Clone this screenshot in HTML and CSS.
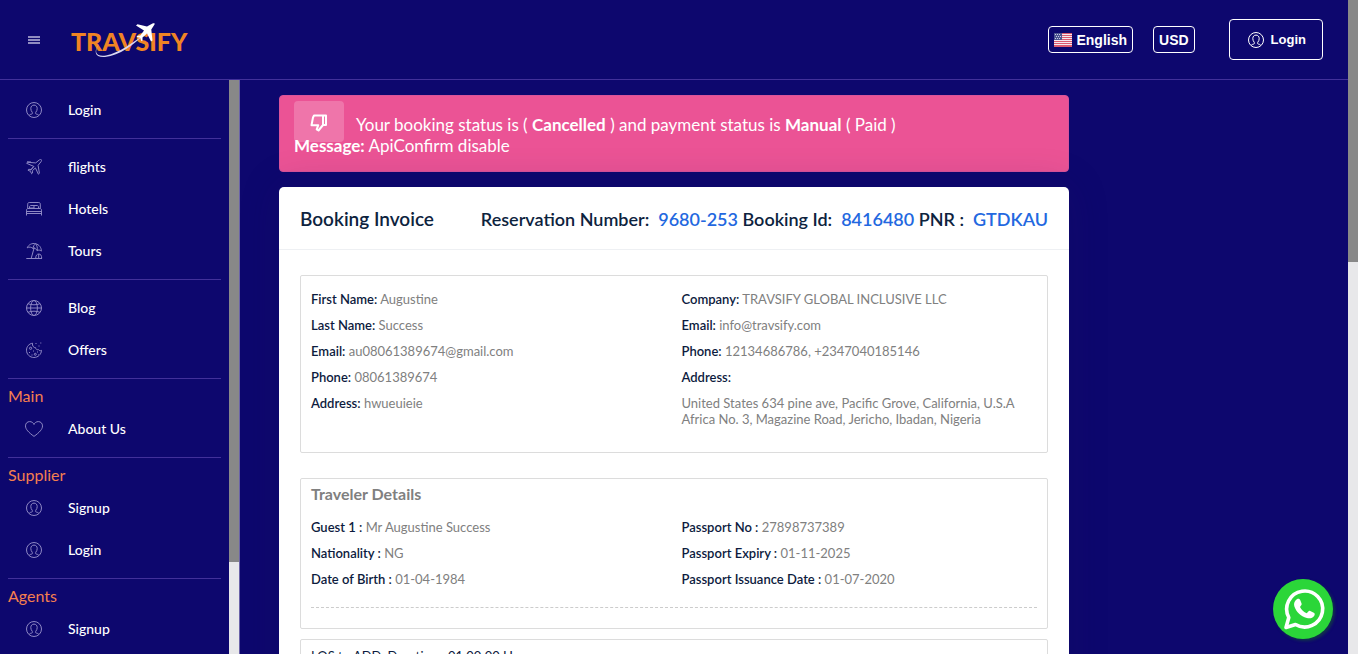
FILE: index.html
```html
<!DOCTYPE html>
<html lang="en">
<head>
<meta charset="utf-8">
<title>Booking Invoice</title>
<link rel="stylesheet" href="styles.css">
</head>
<body>
<svg class="sprite" aria-hidden="true">
  <symbol id="i-user" viewBox="0 0 16 16"><circle cx="8" cy="8" r="7.5"/><path d="M3.2 13.3c.6-.8 1.500-1 2.600-1.300.8-.2.9-1.100.3-1.900-.7-.9-1.300-2-1.300-3.500 0-2.100 1.200-3.500 3.200-3.500s3.200 1.400 3.200 3.500c0 1.500-.6 2.600-1.300 3.500-.6.8-.5 1.700.3 1.900 1.100.3 2 .5 2.600 1.300"/></symbol>
  <symbol id="i-plane" viewBox="0 0 16 16"><path d="M9.700 3.900 13 1.200c.8-.7 2-.9 2.300-.5.4.4.2 1.500-.5 2.300L12.100 6.300l1.300 8-1 .9-3-6.300-3.100 2.900.2 2.200-.8.8-1.300-2.400-2.500-1.300.8-.8 2.300.2 2.800-3.100L.6 4.300l.9-1z"/><path d="M7.800 7.400 4.400 11.500M1 2.800l4 .2"/></symbol>
  <symbol id="i-bed" viewBox="0 0 16 16"><path d="M.5 14.500V9.200c0-1 .6-1.700 1.500-1.700h12c.9 0 1.500.7 1.500 1.700v5.300M.5 10.500h15M.5 12.500h15M1.700 7.400V3.200c0-1 .5-1.700 1.500-1.700h9.600c1 0 1.500.7 1.500 1.700v4.200M3.500 7.400V6c0-.8.4-1.500 1.300-1.500H8V7H3.600M8 4.500h3.200c.9 0 1.300.7 1.300 1.500v1.400"/></symbol>
  <symbol id="i-beach" viewBox="0 0 16 16"><path d="M.3 15.500H16M5.200 15.300 8.300 4.300M1.200 4.800C2.600 1.600 6-.1 9.600.7c3.600.9 5.900 4 5.700 7.400-1.200-1.200-2.900-1.300-4.100-.4-.5-1.700-1.900-2.500-4-2.100C5.500 4 3.100 3.600 1.200 4.800zM7 5.500C7.200 3.400 8 1.800 9.600.7c1.500 1.800 2 4.200 1.600 7M9.700 15.300c0-2.700 1.200-4.300 3.100-4.300s2.900 1.600 2.900 4.300M12.700 11v4.300"/></symbol>
  <symbol id="i-globe" viewBox="0 0 16 16"><circle cx="8" cy="8" r="7.500"/><ellipse cx="8" cy="8" rx="3.400" ry="7.500"/><path d="M.5 8h15M2 3.700c3.600 1.500 8.400 1.500 12 0M2 12.300c3.600-1.500 8.400-1.500 12 0"/></symbol>
  <symbol id="i-cookie" viewBox="0 0 16 16"><path d="M6.500 1.200C3 1.700.5 4.700.5 8.200c0 4.100 3.300 7.300 7.400 7.300s7.400-3.100 7.600-7.100c-1.300.6-2.400.3-3-.8-1.600.4-2.800-.4-2.900-1.900-2 .1-3.600-1.900-3.100-4.500z"/><circle cx="4.600" cy="6.300" r="1.100"/><circle cx="9.300" cy="12.300" r="1"/><path d="M3 10.500h1M7 9h1M11 10h1M5.500 13h1M9.500 1.500h1M12.500 4h1M14.300 1h1M12.500 12.500h.5"/></symbol>
  <symbol id="i-heart" viewBox="0 0 18 16"><path d="M9 15.400C3.500 11.300.5 8.300.5 4.900.5 2.300 2.300.6 4.700.6 6.700.6 8.300 1.700 9 3.500 9.700 1.700 11.300.6 13.300.6c2.400 0 4.200 1.700 4.200 4.300 0 3.400-3 6.400-8.500 10.500z"/></symbol>
</svg>

<div class="page">
  <header class="topbar">
    <div class="brand">
      <button class="menu" aria-label="Toggle menu"><span></span><span></span><span></span></button>
      <a href="#" class="logo" aria-label="Travsify">
        <svg width="122" height="40" viewBox="0 0 122 40">
          <text class="logo-text" x="1" y="31">TRAVSIFY</text>
          <path class="swoosh" d="M29 24C23 33 27 37 36 35.500 49 33 62 23 75 14 63 25 50 35.500 35 37 24.500 37.800 23.500 31 29 24z"/>
          <path class="jet" d="M66 5.500 67.500 4.300 77 6.500 82.500 3.400C84 2.800 85.200 3.200 84.500 4.600L81.300 9.500 82.500 20.500 81 21.500 77 13.500 72.500 17.500 72.500 20.500 71.500 21.300 70 17.800 66.500 17 67.300 15.800 70.300 15.500 74 10.500z"/>
        </svg>
      </a>
    </div>
    <div class="actions">
      <button class="pill">
        <svg width="18" height="14" viewBox="0 0 18 14" aria-hidden="true"><path fill="#f6e9ef" d="M0 0h18v14H0z"/><path fill="#dc5a70" d="M0 0h18v1H0zM0 2h18v1H0zM0 4h18v1H0zM0 6h18v1H0zM0 8h18v1H0zM0 10h18v1H0zM0 12h18v2H0z"/><path fill="#4d5590" d="M0 0h8v7H0z"/><path stroke="#c8cbe6" stroke-dasharray="1 1" d="M1 1.500h6M2 3.500h5M1 5.500h6"/></svg>
        English
      </button>
      <button class="pill">USD</button>
      <a class="login" href="#"><svg class="icon" width="16" height="16"><use href="#i-user"/></svg>Login</a>
    </div>
  </header>

  <div class="body">
    <nav class="sidebar">
      <div class="links">
        <a href="#"><svg class="icon"><use href="#i-user"/></svg>Login</a>
        <hr>
        <a href="#"><svg class="icon"><use href="#i-plane"/></svg>flights</a>
        <a href="#"><svg class="icon"><use href="#i-bed"/></svg>Hotels</a>
        <a href="#"><svg class="icon"><use href="#i-beach"/></svg>Tours</a>
        <hr>
        <a href="#"><svg class="icon"><use href="#i-globe"/></svg>Blog</a>
        <a href="#"><svg class="icon"><use href="#i-cookie"/></svg>Offers</a>
        <hr>
        <h2>Main</h2>
        <a href="#"><svg class="icon"><use href="#i-heart"/></svg>About Us</a>
        <hr>
        <h2>Supplier</h2>
        <a href="#"><svg class="icon"><use href="#i-user"/></svg>Signup</a>
        <a href="#"><svg class="icon"><use href="#i-user"/></svg>Login</a>
        <hr>
        <h2>Agents</h2>
        <a href="#"><svg class="icon"><use href="#i-user"/></svg>Signup</a>
      </div>
      <div class="track"><div class="thumb side-thumb"></div></div>
    </nav>

    <main class="content">
      <div class="column">
        <div class="alert" role="status">
          <div class="alert-row">
            <span class="alert-icon"><svg width="18" height="18" viewBox="0 0 18 18" aria-hidden="true"><path d="M4 1.500h9v9.500l-4.500 5.500-1.800-1.200 1.500-4H1.500L3 3.500zM13 1.500h3V11h-3z"/></svg></span>
            <p>Your booking status is ( <b>Cancelled</b> ) and payment status is <b>Manual</b> ( Paid )</p>
          </div>
          <p><b>Message:</b> ApiConfirm disable</p>
        </div>

        <section class="card">
          <header class="card-head">
            <h1>Booking Invoice</h1>
            <p>Reservation Number: <span>&nbsp;9680-253</span> Booking Id: <span>&nbsp;8416480</span> PNR : <span>&nbsp;GTDKAU</span></p>
          </header>
          <div class="card-body">
            <div class="box parties">
              <div class="cols">
                <div>
                  <p><b>First Name:</b> Augustine</p>
                  <p><b>Last Name:</b> Success</p>
                  <p><b>Email:</b> au08061389674@gmail.com</p>
                  <p><b>Phone:</b> 08061389674</p>
                  <p><b>Address:</b> hwueuieie</p>
                </div>
                <div>
                  <p><b>Company:</b> TRAVSIFY GLOBAL INCLUSIVE LLC</p>
                  <p><b>Email:</b> info@travsify.com</p>
                  <p><b>Phone:</b> 12134686786, +2347040185146</p>
                  <p><b>Address:</b></p>
                  <p>United States 634 pine ave, Pacific Grove, California, U.S.A<br>Africa No. 3, Magazine Road, Jericho, Ibadan, Nigeria</p>
                </div>
              </div>
            </div>
            <div class="box travelers">
              <h2>Traveler Details</h2>
              <div class="cols guest">
                <div>
                  <p><b>Guest 1 :</b> Mr Augustine Success</p>
                  <p><b>Nationality :</b> NG</p>
                  <p><b>Date of Birth :</b> 01-04-1984</p>
                </div>
                <div>
                  <p><b>Passport No :</b> 27898737389</p>
                  <p><b>Passport Expiry :</b> 01-11-2025</p>
                  <p><b>Passport Issuance Date :</b> 01-07-2020</p>
                </div>
              </div>
            </div>
            <div class="box route"><p>LOS to ADD, Duration : 01:00:00 H</p></div>
          </div>
        </section>
      </div>
    </main>
  </div>
  <a class="whatsapp" href="#" aria-label="WhatsApp">
    <svg viewBox="0 0 60 60"><path class="bubble" d="M13 48.500 15.800 38.500A18 18 0 1 1 22.500 45.500z"/><path class="phone" d="M22.500 21.500c1.800-2.400 4-2.200 4.800-.3l1.200 3.100c.5 1.300-.2 2-1.500 3.600 1.400 2.900 3.800 5.200 6.800 6.300 1.500-1.700 2.200-2.700 3.400-2.200l3.600 1.700c1.200.6 1.200 2 .3 3.300-1.500 2.100-4.100 2.900-7.300 2-6.100-1.800-10.800-6.600-12.400-11.600-.8-2.400-.1-4.400 1.100-5.900z"/></svg>
  </a>
</div>
<div class="track window-track"><div class="thumb window-thumb"></div></div>
</body>
</html>
```
FILE: styles.css
```css
* { box-sizing: border-box; margin: 0; }
body {
  display: flex;
  height: 100vh;
  overflow: hidden;
  background: #0d076e;
  color: #808080;
  font: 400 13px/16px Lato, "Liberation Sans", sans-serif;
}
a { color: inherit; text-decoration: none; }
button { font: inherit; color: inherit; background: none; cursor: pointer; }
.sprite { position: absolute; width: 0; height: 0; }
.icon, .sprite symbol { fill: none; stroke: currentColor; stroke-width: 1; }

.page { flex: 1; min-width: 0; display: flex; flex-direction: column; position: relative; }
.topbar {
  flex: none;
  display: flex;
  align-items: center;
  justify-content: space-between;
  height: 80px;
  padding: 0 25px 0 28px;
  border-bottom: 1px solid #41309a;
}
.brand { display: flex; align-items: center; gap: 30px; }
.menu { display: grid; gap: 1px; width: 12px; padding: 0; border: 0; }
.menu span { height: 2px; background: #908cc0; }
.logo svg { display: block; }
.logo-text { font: 900 25px Lato, sans-serif; fill: #f08424; }
.swoosh { fill: #d8d6f2; }
.jet { fill: #fff; }
.actions { display: flex; align-items: center; color: #fff; font: bold 14px/16px "Liberation Sans", Arial, sans-serif; }
.pill {
  display: flex;
  align-items: center;
  gap: 4px;
  height: 27px;
  margin-right: 20px;
  padding: 0 5px;
  border: 1px solid #fff;
  border-radius: 4px;
}
.login {
  display: flex;
  align-items: center;
  gap: 7px;
  height: 41px;
  margin-left: 14px;
  padding: 0 16px 0 18px;
  border: 1px solid #fff;
  border-radius: 4px;
  font-size: 13px;
}

.body { flex: 1; min-height: 0; display: flex; }
.sidebar { flex: none; display: flex; width: 240px; overflow: hidden; border-right: 1px solid #6a62a8; }
.links { flex: 1; padding: 9px 8px 0; color: #fff; font-size: 14px; font-weight: 500; }
.links a { display: flex; align-items: center; gap: 24px; height: 42px; padding-left: 16px; }
.links .icon { width: 20px; height: 16px; color: #8d87c4; }
.links hr { height: 1px; margin: 7px 0; border: 0; background: #41309a; }
.links h2 { padding-bottom: 2px; color: #f57f4e; font-size: 16px; font-weight: 400; line-height: 20px; }
.track { flex: none; width: 10px; background: #e8e8ea; }
.thumb { background: #888; }
.side-thumb { height: 84%; }
.window-thumb { height: 40%; }

.content { flex: 1; min-width: 0; padding: 15px 39px 0; overflow: hidden; display: grid; grid-template-columns: minmax(0, 1fr) 240px; }
.column { display: flex; flex-direction: column; gap: 15px; }
.alert {
  padding: 5px 14px 15px;
  border: 1px solid #d9539a;
  border-radius: 4px;
  background: #eb5395;
  color: #fff;
  font-size: 17px;
  line-height: 21px;
}
.alert-row { display: flex; align-items: flex-end; gap: 12px; margin-bottom: -7px; }
.alert-row p { padding-bottom: 7px; }
.alert-icon {
  display: grid;
  place-items: center;
  width: 50px;
  height: 41px;
  padding-top: 3px;
  border-radius: 4px;
  background: rgba(255, 255, 255, .2);
}
.alert-icon svg { fill: none; stroke: #fff; stroke-width: 2; stroke-linejoin: round; }

.card { border-radius: 5px 5px 0 0; background: #fff; box-shadow: 0 0 40px rgba(30, 20, 90, .2); }
.card-head {
  display: flex;
  justify-content: space-between;
  padding: 20px 21px 18px;
  border-bottom: 1px solid #eef0f3;
  color: #0d233e;
  font-size: 18px;
  font-weight: 600;
  line-height: 24px;
}
.card-head h1 { font-size: 19px; font-weight: inherit; }
.card-head span { color: #2368e0; }
.card-body { padding: 25px 21px; }
.box { padding: 0 10px; border: 1px solid #dcdcdc; border-radius: 2px; }
.box b { color: #0d1b3e; font-weight: 600; }
.cols { display: grid; grid-template-columns: 1fr 1fr; gap: 15px; }
.cols p { margin-bottom: 10px; }
.parties { margin-bottom: 25px; padding-top: 15px; padding-bottom: 15px; }
.travelers { margin-bottom: 10px; padding-bottom: 20px; }
.travelers h2 { margin-bottom: 15px; padding-top: 5px; font-size: 16px; line-height: 20px; }
.guest { padding-bottom: 10px; border-bottom: 1px dashed #ccc; }
.route { padding-top: 8px; padding-bottom: 8px; color: #0d1b3e; }

.whatsapp {
  position: absolute;
  right: 15px;
  bottom: 15px;
  width: 60px;
  height: 60px;
  border-radius: 50%;
  background: #2bd639;
  box-shadow: 2px 2px 3px rgba(20, 70, 60, .7);
}
.bubble { fill: none; stroke: #fff; stroke-width: 3.6; stroke-linejoin: round; }
.phone { fill: #fff; }
```
